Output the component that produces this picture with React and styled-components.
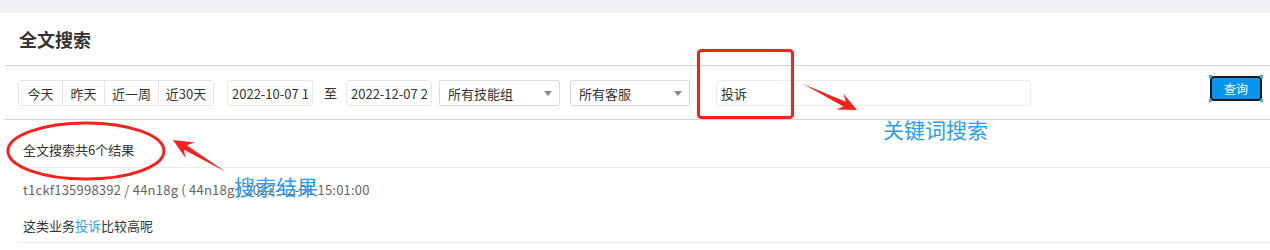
import React from "react";
import styled, { createGlobalStyle } from "styled-components";

const GlobalStyle = createGlobalStyle`
  body {
    margin: 0;
    background: #ffffff;
    font-family: "Noto Sans CJK SC", "Noto Sans", sans-serif;
    color: #333;
  }
`;

const Page = styled.div`
  position: relative;
  width: 1270px;
  height: 250px;
  overflow: hidden;
  background: #ffffff;
`;

const TopBar = styled.div`
  height: 13px;
  background: #eef0f4;
`;

const TitleRow = styled.div`
  height: 52px;
  display: flex;
  align-items: center;
  padding-left: 19px;
`;

const Title = styled.h2`
  margin: 0;
  font-size: 18px;
  font-weight: 700;
  color: #333;
  line-height: 1;
`;

const Divider = styled.div`
  margin-left: ${(p) => p.$inset || 0}px;
  border-top: 1px solid ${(p) => p.$color || "#d4d4d4"};
`;

const Toolbar = styled.div`
  height: 53px;
  display: flex;
  align-items: flex-start;
  padding: 14px 8px 0 18px;
  box-sizing: border-box;
`;

const QuickGroup = styled.div`
  display: flex;
  height: 26px;
  border: 1px solid #e6e6e6;
  border-radius: 3px;
  box-sizing: border-box;
`;

const QuickButton = styled.button`
  width: ${(p) => p.$w}px;
  height: 100%;
  padding: 0;
  border: none;
  border-left: ${(p) => (p.$first ? "none" : "1px solid #e6e6e6")};
  background: #fff;
  font-family: inherit;
  font-size: 13px;
  color: #333;
  cursor: pointer;
`;

const DateInput = styled.input`
  width: 86px;
  height: 26px;
  box-sizing: border-box;
  margin-left: ${(p) => p.$ml || 0}px;
  padding: 0 4px;
  border: 1px solid #e8e8e8;
  border-radius: 3px;
  font-family: inherit;
  font-size: 13px;
  color: #333;
  outline: none;
`;

const To = styled.span`
  width: 33px;
  padding-left: 11px;
  box-sizing: border-box;
  line-height: 26px;
  font-size: 13px;
  color: #333;
`;

const Select = styled.div`
  width: ${(p) => p.$w}px;
  height: 26px;
  margin-left: ${(p) => p.$ml}px;
  box-sizing: border-box;
  display: flex;
  align-items: center;
  justify-content: space-between;
  padding: 0 7px 0 8px;
  border: 1px solid #dcdcdc;
  border-radius: 2px;
  font-size: 13px;
  color: #333;
`;

const Caret = styled.span`
  width: 0;
  height: 0;
  border-left: 4px solid transparent;
  border-right: 4px solid transparent;
  border-top: 5px solid #888;
`;

const KeywordInput = styled.input`
  width: 315px;
  height: 26px;
  margin-left: 26px;
  box-sizing: border-box;
  padding: 0 4px;
  border: 1px solid #ececec;
  border-radius: 3px;
  font-family: inherit;
  font-size: 13px;
  color: #333;
  outline: none;
`;

const SearchButton = styled.button`
  position: relative;
  margin-left: auto;
  margin-top: -4px;
  width: 52px;
  height: 25px;
  box-sizing: border-box;
  border: 2px solid #1a1a1a;
  border-radius: 4px;
  background: #0895f2;
  color: #fff;
  font-family: inherit;
  font-size: 12px;
  padding: 0;
`;

const Handle = styled.span`
  position: absolute;
  width: 3px;
  height: 3px;
  background: #3ea6f4;
  ${(p) => (p.$top ? "top: -3px;" : "bottom: -3px;")}
  ${(p) => (p.$left ? "left: -3px;" : "right: -3px;")}
`;

const ResultHeader = styled.div`
  height: 47px;
  padding: 22px 0 0 23px;
  box-sizing: border-box;
  font-size: 13px;
  line-height: 16px;
  color: #333;
`;

const ResultItem = styled.div`
  margin-left: 18px;
  padding: 14px 0 0 5px;
  height: 75px;
  box-sizing: border-box;
  border-bottom: 1px solid #ececec;
`;

const Meta = styled.div`
  font-size: 13px;
  line-height: 16px;
  letter-spacing: 0.22px;
  color: #666;
`;

const Content = styled.div`
  margin-top: 20px;
  font-size: 13px;
  line-height: 16px;
  color: #333;
`;

const Hit = styled.span`
  color: #2f9ee8;
`;

const Overlay = styled.svg`
  position: absolute;
  top: 0;
  left: 0;
  pointer-events: none;
`;

const Note = styled.div`
  position: absolute;
  left: ${(p) => p.$x}px;
  top: ${(p) => p.$y}px;
  font-size: 21px;
  line-height: 24px;
  color: #2a9df4;
  pointer-events: none;
  white-space: nowrap;
`;

function arrowPoints([x1, y1], [x2, y2], head, width) {
  const dx = x2 - x1;
  const dy = y2 - y1;
  const len = Math.hypot(dx, dy);
  const ux = dx / len;
  const uy = dy / len;
  const nx = -uy;
  const ny = ux;
  const at = (back, side) => [x2 - ux * back + nx * side, y2 - uy * back + ny * side];
  const pts = [
    [x1, y1],
    at(head * 0.72, 2.6),
    at(head, width / 2),
    [x2, y2],
    at(head, -width / 2),
    at(head * 0.72, -2.6),
  ];
  return pts.map((p) => p.map((v) => v.toFixed(1)).join(",")).join(" ");
}

const quick = [
  { label: "今天", w: 43 },
  { label: "昨天", w: 42 },
  { label: "近一周", w: 54 },
  { label: "近30天", w: 55 },
];

export default function App() {
  return (
    <Page>
      <GlobalStyle />
      <TopBar />
      <TitleRow>
        <Title>全文搜索</Title>
      </TitleRow>
      <Divider $inset={5} />
      <Toolbar>
        <QuickGroup>
          {quick.map((q, i) => (
            <QuickButton key={q.label} $w={q.w} $first={i === 0}>
              {q.label}
            </QuickButton>
          ))}
        </QuickGroup>
        <DateInput $ml={13} readOnly value="2022-10-07 10:00:00" />
        <To>至</To>
        <DateInput readOnly value="2022-12-07 23:59:59" />
        <Select $w={121} $ml={7}>
          所有技能组
          <Caret />
        </Select>
        <Select $w={120} $ml={10}>
          所有客服
          <Caret />
        </Select>
        <KeywordInput readOnly value="投诉" />
        <SearchButton>
          查询
          <Handle $top $left />
          <Handle $top />
          <Handle $left />
          <Handle />
        </SearchButton>
      </Toolbar>
      <Divider $inset={5} />
      <ResultHeader>全文搜索共6个结果</ResultHeader>
      <Divider $inset={18} $color="#ececec" />
      <ResultItem>
        <Meta>t1ckf135998392 / 44n18g ( 44n18g ) 2022-12-01 15:01:00</Meta>
        <Content>
          这类业务<Hit>投诉</Hit>比较高呢
        </Content>
      </ResultItem>

      <Overlay width="1270" height="250" viewBox="0 0 1270 250">
        <rect x="698.5" y="50.5" width="94" height="67" rx="3" fill="none" stroke="#f5211b" strokeWidth="3" />
        <polygon points={arrowPoints([803, 84], [857, 110], 19, 17)} fill="#f5211b" />
        <ellipse cx="86" cy="151" rx="78" ry="28" fill="none" stroke="#f5211b" strokeWidth="3" />
        <polygon points={arrowPoints([226, 172], [173, 140], 20, 18)} fill="#f5211b" />
      </Overlay>
      <Note $x={883} $y={117}>关键词搜索</Note>
      <Note $x={234} $y={174}>搜索结果</Note>
    </Page>
  );
}
